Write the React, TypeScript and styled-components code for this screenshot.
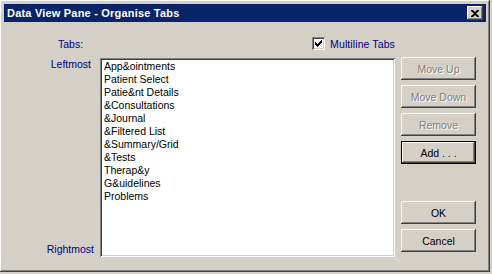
import React from 'react';
import styled, { createGlobalStyle, css } from 'styled-components';

const GlobalStyle = createGlobalStyle`
  html, body {
    margin: 0;
    padding: 0;
    background: #d4d0c8;
  }
  body {
    font-family: 'Liberation Sans', Arial, sans-serif;
    font-size: 10.5px;
  }
`;

const TABS = [
  'App&ointments',
  'Patient Select',
  'Patie&nt Details',
  '&Consultations',
  '&Journal',
  '&Filtered List',
  '&Summary/Grid',
  '&Tests',
  'Therap&y',
  'G&uidelines',
  'Problems',
];

const raised = css`
  box-shadow: inset -1px -1px #404040, inset 1px 1px #ffffff,
    inset -2px -2px #808080, inset 2px 2px #d4d0c8;
`;

const sunken = css`
  box-shadow: inset 1px 1px #808080, inset -1px -1px #ffffff,
    inset 2px 2px #404040, inset -2px -2px #d4d0c8;
`;

const Window = styled.div`
  width: 490px;
  height: 272px;
  box-sizing: border-box;
  padding: 4px;
  background: #d4d0c8;
  ${raised};
  display: flex;
  flex-direction: column;
`;

const TitleBar = styled.div`
  height: 18px;
  background: #0a246a;
  display: flex;
  align-items: center;
  justify-content: space-between;
  padding: 0 3px 0 3px;
`;

const Title = styled.span`
  color: #fff;
  font-weight: bold;
  font-size: 11px;
  letter-spacing: 0.2px;
`;

const CloseBox = styled.div`
  width: 16px;
  height: 14px;
  background: #d4d0c8;
  ${raised};
  display: flex;
  align-items: center;
  justify-content: center;
`;

const Body = styled.div`
  flex: 1;
  display: flex;
  flex-direction: column;
  padding: 14px 0 0 0;
`;

const HeaderRow = styled.div`
  display: flex;
  align-items: center;
  height: 15px;
`;

const Label = styled.span<{ $pad?: number }>`
  color: #000080;
  padding-left: ${(p) => p.$pad ?? 0}px;
  white-space: nowrap;
`;

const CheckRow = styled.label`
  display: flex;
  align-items: center;
  gap: 5px;
  margin-left: 229px;
  color: #000080;
  letter-spacing: 0.1px;
`;

const CheckBox = styled.span`
  width: 13px;
  height: 13px;
  box-sizing: border-box;
  background: #fff;
  ${sunken};
  display: flex;
  align-items: center;
  justify-content: center;
`;

const Main = styled.div`
  display: flex;
  margin-top: 7px;
`;

const SideLabels = styled.div`
  width: 96px;
  display: flex;
  flex-direction: column;
  justify-content: space-between;
  padding: 0 0 2px 0;
`;

const SideLabel = styled.span<{ $right: number }>`
  color: #000080;
  text-align: right;
  padding-right: ${(p) => p.$right}px;
`;

const ListBox = styled.div`
  width: 295px;
  height: 199px;
  box-sizing: border-box;
  background: #fff;
  ${sunken};
  padding: 2px 4px;
  display: flex;
  flex-direction: column;
`;

const ListItem = styled.div`
  height: 13px;
  line-height: 13px;
  color: #000;
  white-space: nowrap;
`;

const ButtonColumn = styled.div`
  width: 75px;
  margin-left: 6px;
  margin-top: -1px;
  display: flex;
  flex-direction: column;
  justify-content: space-between;
  padding-bottom: 5px;
`;

const ButtonGroup = styled.div`
  display: flex;
  flex-direction: column;
  gap: 5px;
`;

const Button = styled.button<{ $default?: boolean }>`
  width: 75px;
  height: 23px;
  box-sizing: border-box;
  border: none;
  background: #d4d0c8;
  font-family: 'Liberation Sans', Arial, sans-serif;
  font-size: 10.5px;
  color: #000;
  padding: 0;
  ${raised};
  ${(p) =>
    p.$default &&
    css`
      box-shadow: inset 0 0 0 1px #000, inset -2px -2px #404040,
        inset 2px 2px #ffffff, inset -3px -3px #808080;
    `}
  &:disabled {
    color: #808080;
    text-shadow: 1px 1px #fff;
  }
`;

export default function App() {
  return (
    <>
      <GlobalStyle />
      <Window>
        <TitleBar>
          <Title>Data View Pane - Organise Tabs</Title>
          <CloseBox>
            <svg width="8" height="7" viewBox="0 0 8 7">
              <path d="M0 0h2l2 2 2-2h2v1L5 3.5 8 6v1H6L4 5 2 7H0V6l3-2.5L0 1z" fill="#000" />
            </svg>
          </CloseBox>
        </TitleBar>
        <Body>
          <HeaderRow>
            <Label $pad={54}>Tabs:</Label>
            <CheckRow>
              <CheckBox>
                <svg width="7" height="7" viewBox="0 0 7 7">
                  <path d="M0 2h1v1h1v1h1V3h1V2h1V1h1V0h1v3H6v1H5v1H4v1H3v1H2V6H1V5H0z" fill="#000" />
                </svg>
              </CheckBox>
              Multiline Tabs
            </CheckRow>
          </HeaderRow>
          <Main>
            <SideLabels>
              <SideLabel $right={9}>Leftmost</SideLabel>
              <SideLabel $right={6}>Rightmost</SideLabel>
            </SideLabels>
            <ListBox>
              {TABS.map((t) => (
                <ListItem key={t}>{t}</ListItem>
              ))}
            </ListBox>
            <ButtonColumn>
              <ButtonGroup>
                <Button disabled>Move Up</Button>
                <Button disabled>Move Down</Button>
                <Button disabled>Remove</Button>
                <Button $default>Add . . .</Button>
              </ButtonGroup>
              <ButtonGroup>
                <Button>OK</Button>
                <Button>Cancel</Button>
              </ButtonGroup>
            </ButtonColumn>
          </Main>
        </Body>
      </Window>
    </>
  );
}
